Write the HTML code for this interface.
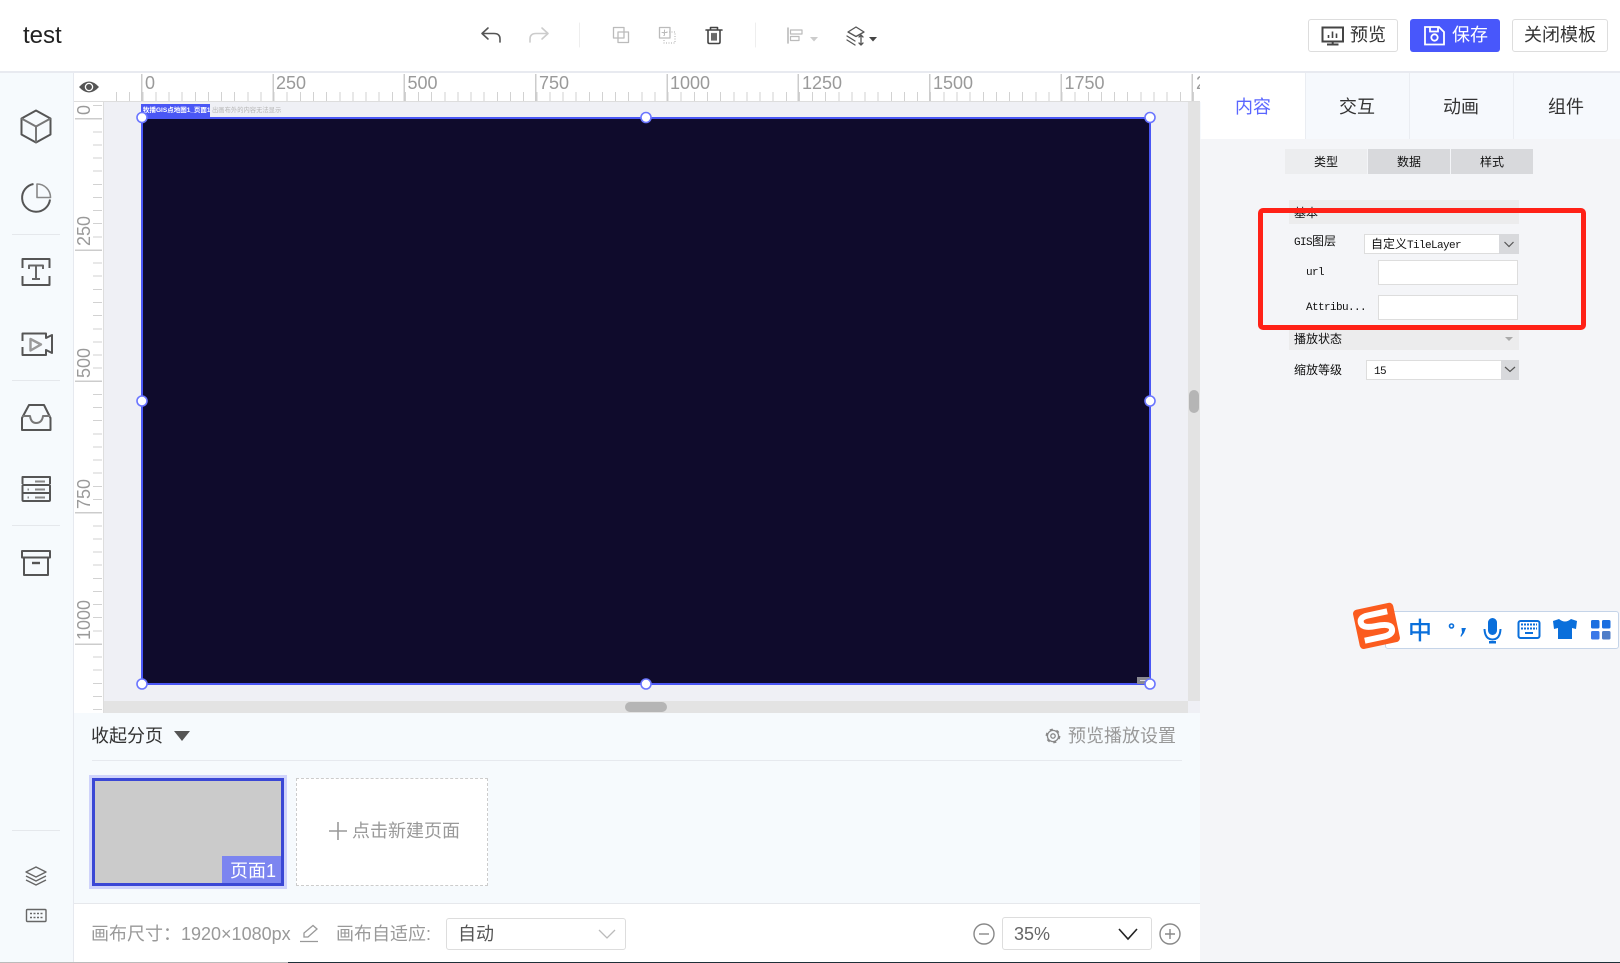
<!DOCTYPE html>
<html lang="zh">
<head>
<meta charset="utf-8">
<title>test</title>
<style>
html,body{margin:0;padding:0;width:1620px;height:963px;overflow:hidden;background:#fff}
body{position:relative;font-family:"Liberation Sans","Noto Sans CJK SC",sans-serif;color:#333}
div,span.a{position:absolute;box-sizing:border-box}
.t{white-space:nowrap;line-height:24px;height:24px;font-size:18px}
.s{white-space:nowrap;line-height:16px;height:16px;font-size:12px;color:#111;font-family:"WenQuanYi Zen Hei","Noto Sans CJK SC",sans-serif}
.s i{font-style:normal;font-family:"Liberation Mono",monospace;font-size:11px;letter-spacing:-.6px}
.g{color:#999}
svg{position:absolute;left:0;top:0}
</style>
</head>
<body>
<!-- header -->
<div style="left:0;top:0;width:1620px;height:71px;background:#fff"></div>
<div style="left:0;top:71px;width:1620px;height:2px;background:#e8eaf0"></div>
<div class="t" style="left:23px;top:23px;font-size:24px;line-height:26px;height:26px;color:#222">test</div>

<div style="left:1308px;top:19px;width:90px;height:33px;border:1px solid #ddd;border-radius:3px"></div>
<div class="t" style="left:1350px;top:23px;color:#333">预览</div>
<div style="left:1410px;top:19px;width:90px;height:33px;background:#4857fb;border-radius:3px"></div>
<div class="t" style="left:1452px;top:23px;color:#fff">保存</div>
<div style="left:1512px;top:19px;width:96px;height:33px;border:1px solid #ddd;border-radius:3px"></div>
<div class="t" style="left:1524px;top:23px;color:#333">关闭模板</div>

<!-- left sidebar -->
<div style="left:0;top:73px;width:74px;height:889px;background:#f6fafd;border-right:1px solid #e6e9ef"></div>
<div style="left:12px;top:234px;width:48px;height:1px;background:#e5e8ec"></div>
<div style="left:12px;top:380px;width:48px;height:1px;background:#e5e8ec"></div>
<div style="left:12px;top:525px;width:48px;height:1px;background:#e5e8ec"></div>
<div style="left:12px;top:830px;width:48px;height:1px;background:#e5e8ec"></div>

<!-- canvas area -->
<div style="left:104px;top:102px;width:1084px;height:599px;background:#eff0f5"></div>
<div style="left:104px;top:701px;width:1084px;height:12px;background:#e3e3e3"></div>
<div style="left:1188px;top:102px;width:12px;height:599px;background:#e3e3e3"></div>
<div style="left:1188px;top:701px;width:12px;height:12px;background:#eff0f5"></div>
<div style="left:1189px;top:390px;width:10px;height:23px;background:#b5b5b5;border-radius:5px"></div>
<div style="left:625px;top:702px;width:42px;height:10px;background:#b5b5b5;border-radius:5px"></div>

<!-- rulers -->
<div style="left:74px;top:73px;width:1126px;height:29px;background:#fff;border-bottom:1px solid #ddd"></div>
<div style="left:74px;top:102px;width:30px;height:611px;background:#fff;border-right:1px solid #ddd"></div>
<div style="left:115.74px;top:92px;width:1084px;height:9px;background:repeating-linear-gradient(90deg,#d2d2d2 0,#d2d2d2 1px,transparent 1px,transparent 13.133px)"></div>
<div style="left:141px;top:74px;width:1059px;height:27px;background:repeating-linear-gradient(90deg,#ccc 0,#ccc 1.5px,transparent 1.5px,transparent 131.33px)"></div>
<div style="left:93px;top:104.5px;width:9px;height:608px;background:repeating-linear-gradient(180deg,#d2d2d2 0,#d2d2d2 1px,transparent 1px,transparent 13.133px)"></div>
<div style="left:75px;top:117.5px;width:27px;height:595px;background:repeating-linear-gradient(180deg,#ccc 0,#ccc 1.5px,transparent 1.5px,transparent 131.33px)"></div>

<!-- main canvas -->
<div style="left:141px;top:117px;width:1010px;height:568px;background:#0f0b2c;border:2px solid #4a57f5"></div>
<div style="left:141px;top:104px;width:69px;height:14px;background:#4a57f5"></div>
<div style="left:143px;top:105px;height:12px;line-height:12px;font-size:6.5px;font-weight:bold;color:#fff;white-space:nowrap">牧播GIS点地图1_页面1</div>
<div style="left:212px;top:105px;height:12px;line-height:12px;font-size:6.3px;color:#b5b5b5;white-space:nowrap">出画布外的内容无法显示</div>
<div style="left:1137px;top:677px;width:13px;height:7px;background:#8a8a92"></div>
<div style="left:1140px;top:680px;width:6px;height:1px;background:#ddd"></div>

<!-- pagination -->
<div style="left:74px;top:713px;width:1126px;height:190px;background:#f6fafd"></div>
<div class="t" style="left:91px;top:724px;color:#333">收起分页</div>
<div style="left:92px;top:760px;width:1090px;height:1px;background:#e6e9ee"></div>
<div class="t g" style="left:1068px;top:724px">预览播放设置</div>
<div style="left:89px;top:775px;width:198px;height:114px;border:3px solid #cfd3fb"></div>
<div style="left:92px;top:778px;width:192px;height:108px;background:#cbcbcb;border:3px solid #3a47d5"></div>
<div style="left:222px;top:856px;width:59px;height:27px;background:#7c85f0"></div>
<div class="t" style="left:230px;top:859px;color:#fff">页面1</div>
<div style="left:296px;top:778px;width:192px;height:108px;background:#fff;border:1px dashed #ccc"></div>
<div class="t g" style="left:352px;top:819px">点击新建页面</div>

<!-- footer -->
<div style="left:74px;top:903px;width:1126px;height:59px;background:#fff;border-top:1px solid #e6e8ec"></div>
<div class="t g" style="left:91px;top:922px">画布尺寸：1920×1080px</div>
<div class="t g" style="left:336px;top:922px">画布自适应:</div>
<div style="left:446px;top:918px;width:180px;height:32px;border:1px solid #ddd;border-radius:3px;background:#fff"></div>
<div class="t" style="left:458px;top:922px;color:#555">自动</div>
<div style="left:1002px;top:917px;width:150px;height:33px;border:1px solid #ddd;border-radius:3px;background:#fff"></div>
<div class="t" style="left:1014px;top:922px;color:#666">35%</div>
<div style="left:0;top:962px;width:288px;height:1px;background:#bbb"></div>
<div style="left:288px;top:962px;width:1332px;height:1px;background:#1e2f38"></div>

<!-- right panel -->
<div style="left:1200px;top:73px;width:420px;height:889px;background:#f4f5f8"></div>
<div style="left:1200px;top:73px;width:420px;height:66px;background:#f6f9fd"></div>
<div style="left:1201px;top:73px;width:104px;height:66px;background:#fff"></div>
<div style="left:1305px;top:73px;width:1px;height:66px;background:#eaedf2"></div>
<div style="left:1409px;top:73px;width:1px;height:66px;background:#eaedf2"></div>
<div style="left:1513px;top:73px;width:1px;height:66px;background:#eaedf2"></div>
<div class="t" style="left:1235px;top:95px;color:#5a66ff">内容</div>
<div class="t" style="left:1339px;top:95px">交互</div>
<div class="t" style="left:1443px;top:95px">动画</div>
<div class="t" style="left:1548px;top:95px">组件</div>
<div class="s" style="left:1285px;top:149px;width:82px;height:25px;line-height:26px;background:#ecedef;text-align:center">类型</div>
<div class="s" style="left:1368px;top:149px;width:82px;height:25px;line-height:26px;background:#d8d9dc;text-align:center">数据</div>
<div class="s" style="left:1451px;top:149px;width:82px;height:25px;line-height:26px;background:#d8d9dc;text-align:center">样式</div>

<div style="left:1289px;top:200px;width:230px;height:24px;background:#ececed"></div>
<div class="s" style="left:1294px;top:205px">基本</div>
<div class="s" style="left:1294px;top:233px"><i>GIS</i>图层</div>
<div style="left:1364px;top:234px;width:155px;height:20px;background:#fff;border:1px solid #ddd"></div>
<div style="left:1499px;top:234px;width:20px;height:20px;background:#d8d9dc"></div>
<div class="s" style="left:1371px;top:236px">自定义<i>TileLayer</i></div>
<div class="s" style="left:1306px;top:263px"><i>url</i></div>
<div style="left:1378px;top:260px;width:140px;height:25px;background:#fff;border:1px solid #ddd"></div>
<div class="s" style="left:1306px;top:298px"><i>Attribu...</i></div>
<div style="left:1378px;top:295px;width:140px;height:25px;background:#fff;border:1px solid #ddd"></div>
<div style="left:1289px;top:330px;width:230px;height:20px;background:#ececed"></div>
<div class="s" style="left:1294px;top:331px">播放状态</div>
<div class="s" style="left:1294px;top:362px">缩放等级</div>
<div style="left:1366px;top:360px;width:153px;height:20px;background:#fff;border:1px solid #ddd"></div>
<div style="left:1501px;top:360px;width:18px;height:20px;background:#d8d9dc"></div>
<div class="s" style="left:1374px;top:362px"><i>15</i></div>
<div style="left:1258px;top:208px;width:328px;height:122px;border:5px solid #ff2117;border-radius:5px"></div>

<!-- IME bar -->
<div style="left:1385px;top:611px;width:234px;height:38px;background:#fff;border:1px solid #c5d4e8;border-radius:3px"></div>

<svg width="1620" height="963" viewBox="0 0 1620 963" fill="none">
<defs><clipPath id="rc"><rect x="74" y="73" width="1126" height="640"/></clipPath></defs>
<!-- ruler labels -->
<g clip-path="url(#rc)" font-family="Liberation Sans, sans-serif" font-size="18" fill="#9a9a9a">
<text x="145" y="89">0</text><text x="276" y="89">250</text><text x="407.5" y="89">500</text><text x="539" y="89">750</text><text x="670" y="89">1000</text><text x="802" y="89">1250</text><text x="933" y="89">1500</text><text x="1064.5" y="89">1750</text><text x="1196" y="89">2000</text>
<text transform="translate(90 115) rotate(-90)">0</text>
<text transform="translate(90 246) rotate(-90)">250</text>
<text transform="translate(90 378) rotate(-90)">500</text>
<text transform="translate(90 509) rotate(-90)">750</text>
<text transform="translate(90 640) rotate(-90)">1000</text>
</g>
<rect x="1200" y="73" width="1" height="29" fill="#fff"/>

<!-- eye -->
<path d="M79 87Q89 76 99 87Q89 98 79 87Z" fill="#555"/><circle cx="89" cy="87" r="3.6" fill="none" stroke="#fff" stroke-width="1.3"/>

<!-- handles -->
<g fill="#fff" stroke="#6b76ff" stroke-width="1.6">
<circle cx="142" cy="117.5" r="5"/><circle cx="646" cy="117.5" r="5"/><circle cx="1150" cy="117.5" r="5"/>
<circle cx="142" cy="401" r="5"/><circle cx="1150" cy="401" r="5"/>
<circle cx="142" cy="684" r="5"/><circle cx="646" cy="684" r="5"/><circle cx="1150" cy="684" r="5"/>
</g>

<!-- toolbar -->
<g stroke-width="1.6" stroke-linecap="round" stroke-linejoin="round">
<path d="M488 28L482 33.5L488 39M482 33.5H494Q500 33.5 500 39V42" stroke="#555"/>
<path d="M542 28L548 33.5L542 39M548 33.5H536Q530 33.5 530 39V42" stroke="#ccc"/>
<path d="M579.5 23V47M755.5 23V47" stroke="#eee" stroke-width="1"/>
<path d="M613.5 27.5H624V38H613.5ZM618 32H628.5V42.5H618Z" stroke="#bbb" stroke-width="1.3"/>
<path d="M659.5 27.5H670V38H659.5Z" stroke="#bbb" stroke-width="1.3"/>
<path d="M664 32H675V43H664Z" stroke="#bbb" stroke-width="1.2" stroke-dasharray="1 1.5" stroke-linecap="butt"/>
<path d="M662 32.5H667M664.5 30V35" stroke="#bbb" stroke-width="1"/>
<path d="M706 30H722M710.5 30V27.5H717.5V30M708 30V42Q708 43.5 709.5 43.5H718.5Q720 43.5 720 42V30M712 33.5V40M714 33.5V40M716 33.5V40" stroke="#444"/>
<path d="M788 28V43" stroke="#bbb"/><path d="M790.5 30H802V34H790.5ZM790.5 36.5H799V40.5H790.5Z" stroke="#bbb" stroke-width="1.2"/>
<path d="M856 27L864 32L856 36.5L848 32Z" stroke="#555" stroke-width="1.3"/>
<path d="M847 36L855 41M847 40L855 45M861 35V45M859 37L861 35L863 37M859 43L861 45L863 43" stroke="#555" stroke-width="1.3"/>
</g>
<path d="M810 37H818L814 41.5Z" fill="#ccc"/><path d="M869 37H877L873 41.5Z" fill="#444"/>

<!-- button icons -->
<g stroke="#444" stroke-width="2"><rect x="1322.5" y="27.5" width="20.5" height="14"/><path d="M1332.7 42V44M1327 44.5H1338.5"/><path d="M1328.5 38V35M1332.5 38V31.5M1336.5 38V33.5" stroke-width="1.6"/></g>
<g stroke="#fff" stroke-width="1.8"><path d="M1425 27H1439L1444 32V44.5H1425Z"/><path d="M1430 27V31.5H1438V27"/><circle cx="1434.5" cy="37.5" r="3.2"/></g>

<!-- sidebar icons -->
<g stroke="#555" stroke-width="2" stroke-linejoin="round">
<path d="M36 110.5L50.5 118.5V134.5L36 142.5L21.5 134.5V118.5Z"/>
<path d="M21.5 118.5L36 126.5L50.5 118.5M36 126.5V142.5" stroke="#777"/>
<path d="M33.5 184A14 14 0 1 0 50 199.5"/>
<path d="M37 184V197.5H50.5A13.5 13.5 0 0 0 37 184Z" stroke="#888" stroke-width="1.6"/>
<path d="M22.5 268V259H49.5V268M22.5 276V285H49.5V276"/>
<path d="M29 269V265.5H43V269M36 265.5V279M32 279H40" stroke="#666"/>
<path d="M22.5 341V333.5H46V338L52 335V353L46 350V355H22.5V347"/>
<path d="M30.5 339L41 344.5L30.5 350.5Z" stroke="#999" stroke-width="2.4"/>
<path d="M22 418L29 405H44L50.5 418V430H22Z"/>
<path d="M22 416H30Q31 423 36 423Q42 423 43 416H50.5" stroke="#777"/>
<path d="M22.5 484V477H50V484"/>
<rect x="22.5" y="485" width="27.5" height="16" rx="1"/><path d="M22.5 493H50"/>
<path d="M35 481.5H45M35 489.5H45M35 497.5H45" stroke="#888"/>
<path d="M27.5 489.5H29M27.5 497.5H29" stroke="#888"/>
<rect x="22" y="551" width="28" height="6.5"/><path d="M24 558V575H48V558"/>
<path d="M32 563H40" stroke-width="2.4"/>
</g>
<g stroke="#666" stroke-width="1.4" stroke-linejoin="round">
<path d="M36 867L46 872L36 877L26 872Z"/><path d="M26 876L36 881L46 876M26 880L36 885L46 880"/>
<rect x="26.5" y="909.5" width="19.5" height="12" rx="1"/>
<path d="M30 913.5H42.5M30 917.5H42.5" stroke-dasharray="2 1.5"/>
</g>

<!-- page bar icons -->
<path d="M174 731H190L182 741Z" fill="#555"/>
<path d="M338 822V840M329 831H347" stroke="#999" stroke-width="1.6"/>
<g stroke="#888"><circle cx="1053" cy="736" r="5.6" stroke-width="1.3"/><circle cx="1053" cy="736" r="2.2" stroke-width="1.3"/><circle cx="1053" cy="736" r="6.4" stroke-width="2" stroke-dasharray="3 3.7"/></g>
<path d="M304 937V933L313 925.5L317 929L308 937ZM300 941.5H318" stroke="#999" stroke-width="1.3"/>
<path d="M599 930L607 938L615 930" stroke="#bbb" stroke-width="1.3"/>
<path d="M1119 929L1128 939L1137 929" stroke="#222" stroke-width="1.6"/>
<g stroke="#888" stroke-width="1.4"><circle cx="984" cy="934" r="10"/><path d="M979 934H989"/><circle cx="1170" cy="934" r="10"/><path d="M1165 934H1175M1170 929V939"/></g>

<!-- form arrows -->
<path d="M1504.5 242L1509 246.5L1513.5 242M1505 367L1510 371.5L1515 367" stroke="#555" stroke-width="1.2"/>
<path d="M1505 337H1513L1509 341Z" fill="#aaa"/>

<!-- sogou -->
<g transform="rotate(-12 1376 626)"><rect x="1356" y="606" width="41" height="40" rx="4" fill="#fb5b1e"/>
<path d="M1390 614H1370Q1361 614 1362 620.5Q1363 626 1376 626Q1391 626 1391 632Q1391 638 1381 638H1362" stroke="#fff" stroke-width="6"/></g>
<text x="1408" y="639" font-family="Noto Sans CJK SC, sans-serif" font-size="24" fill="#0a6fdb" font-weight="500">中</text>
<circle cx="1451.5" cy="626" r="2" stroke="#0a6fdb" stroke-width="1.6"/>
<path d="M1461.5 628H1466L1464 633L1461 637L1460.5 636L1462 632.5Z" fill="#0a6fdb"/>
<rect x="1488" y="618" width="9" height="17" rx="4.5" fill="#0a6fdb"/>
<path d="M1484.5 629Q1485 639.5 1492.5 639.5Q1500 639.5 1500.5 629" stroke="#0a6fdb" stroke-width="2"/>
<rect x="1489" y="641" width="7" height="2.5" fill="#0a6fdb"/>
<rect x="1518.5" y="621" width="21" height="17" rx="2" stroke="#0a6fdb" stroke-width="2"/>
<path d="M1521 624.5H1537M1521 628.5H1537" stroke="#0a6fdb" stroke-width="2" stroke-dasharray="2 1"/>
<path d="M1525 633H1533" stroke="#0a6fdb" stroke-width="2"/>
<path d="M1559 619L1553 621L1554 629L1558 628V639H1572V628L1576 629L1577 621L1571 619Q1565 624 1559 619Z" fill="#0a6fdb"/>
<rect x="1591" y="620" width="8.5" height="8.5" rx="1.5" fill="#1a6ee0"/>
<rect x="1602" y="620" width="8.5" height="8.5" rx="1.5" fill="#1a6ee0"/>
<rect x="1591" y="631" width="8.5" height="8.5" rx="1.5" fill="#3a78e8"/>
<rect x="1602" y="631" width="8.5" height="8.5" rx="1.5" fill="#4f7dc8"/>
</svg>
</body>
</html>
